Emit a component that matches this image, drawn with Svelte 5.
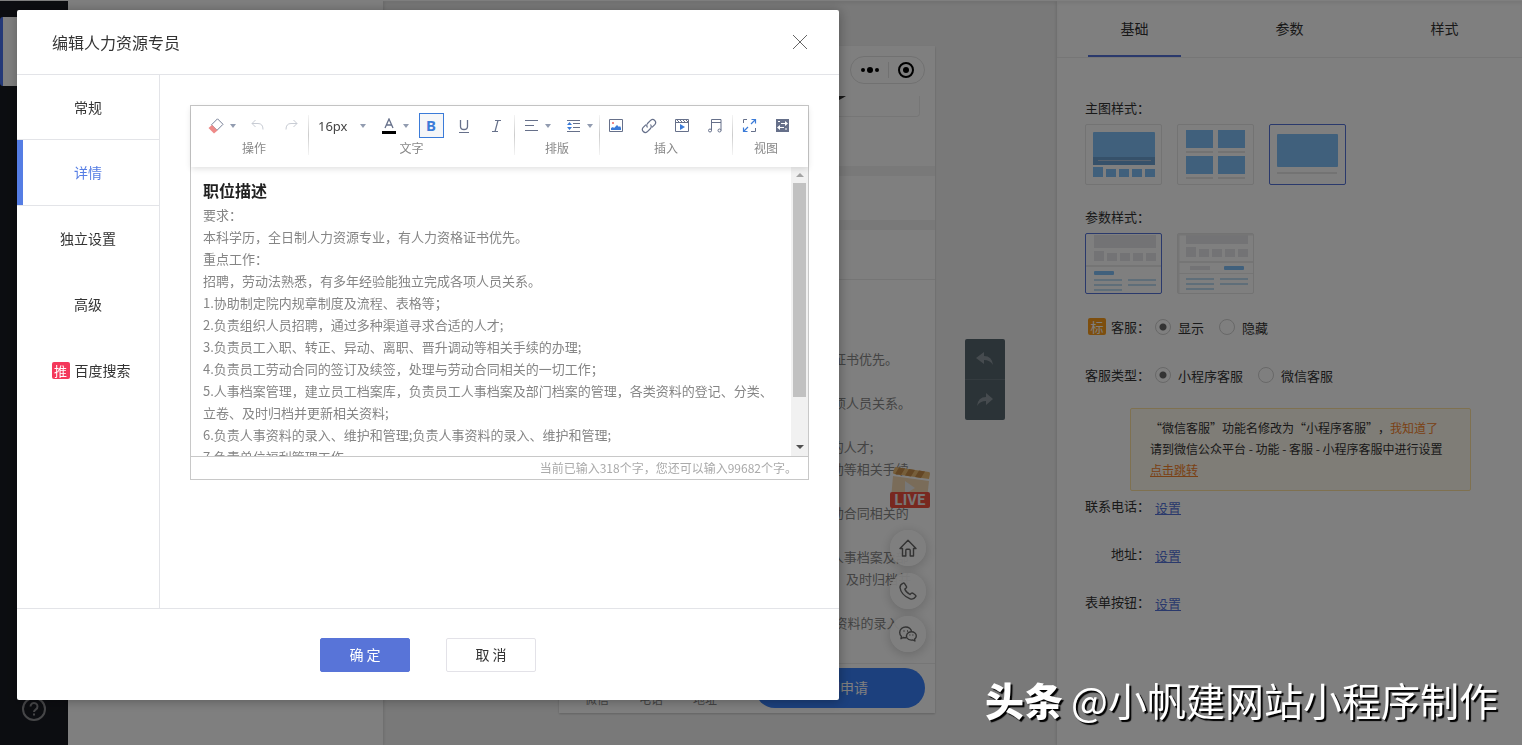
<script lang="ts">
	const tabs = [
		{ name: '常规' },
		{ name: '详情' },
		{ name: '独立设置' },
		{ name: '高级' },
		{ name: '百度搜索', badge: '推' }
	];
	const panelTabs = ['基础', '参数', '样式'];
	const duties = [
		'要求：',
		'本科学历，全日制人力资源专业，有人力资格证书优先。',
		'重点工作：',
		'招聘，劳动法熟悉，有多年经验能独立完成各项人员关系。',
		'1.协助制定院内规章制度及流程、表格等；',
		'2.负责组织人员招聘，通过多种渠道寻求合适的人才;',
		'3.负责员工入职、转正、异动、离职、晋升调动等相关手续的办理;',
		'4.负责员工劳动合同的签订及续签，处理与劳动合同相关的一切工作；',
		'5.人事档案管理，建立员工档案库，负责员工人事档案及部门档案的管理，各类资料的登记、分类、立卷、及时归档并更新相关资料;',
		'6.负责人事资料的录入、维护和管理;负责人事资料的录入、维护和管理;',
		'7.负责单位福利管理工作'
	];
	const links = ['联系电话：', '地址：', '表单按钮：'];

	let activeTab = $state('详情');
	let activePanel = $state('基础');
	let imageStyle = $state(2);
	let paramStyle = $state(0);
	let service = $state('显示');
	let serviceType = $state('小程序客服');
	let fontSize = $state('16px');
	let bold = $state(true);
</script>

{#snippet caret()}
	<svg class="caret" viewBox="0 0 6 4" width="6" height="4"><path d="M0 0h6L3 4z" fill="#929cb0" /></svg>
{/snippet}

<div class="app">
	<nav class="rail">
		<a class="rail-item" href="#design" aria-label="设计"></a>
		<button class="rail-help" aria-label="帮助">
			<svg viewBox="0 0 24 24" width="24" height="24" fill="none" stroke="currentColor" stroke-width="2"><circle cx="12" cy="12" r="11" /><path d="M8.5 9.5a3.5 3.5 0 1 1 5.4 2.9c-1.2.8-1.9 1.3-1.9 2.6" /><path d="M12 16.500v2" /></svg>
		</button>
	</nav>
	<div class="drawer"></div>

	<main class="canvas">
		<section class="phone">
			<div class="phone-top">
				<div class="capsule">
					<svg viewBox="0 0 18 8" width="18" height="8"><circle cx="2" cy="4" r="2" /><circle cx="9" cy="4" r="3" /><circle cx="16" cy="4" r="2" /></svg>
					<i></i>
					<svg viewBox="0 0 16 16" width="16" height="16"><circle cx="8" cy="8" r="7" fill="none" stroke="#000" stroke-width="2" /><circle cx="8" cy="8" r="3" /></svg>
				</div>
				<div class="phone-image">
					<svg viewBox="0 0 60 20" width="60" height="20"><path d="M0 16Q25 8 39 0h8Q32 10 0 18z" fill="#333" /></svg>
				</div>
			</div>
			<div class="phone-block"></div>
			<div class="phone-title"></div>
			<div class="phone-text">
				<h3>职位描述</h3>
				{#each duties as line}
					<p>{line}</p>
				{/each}
			</div>
			<footer class="phone-bar">
				<a href="#wechat">微信</a>
				<a href="#tel">电话</a>
				<a href="#address">地址</a>
				<button>立即申请</button>
			</footer>
			<div class="floats">
				<svg class="live" viewBox="0 0 40 41" width="40" height="41">
					<path d="M3 9l36 5-2 18H1z" fill="#efc791" opacity=".7" />
					<path d="M5 0l34 5q1 0 1 2l-1 5L4 7q-1 0-1-2z" fill="#edbd75" />
					<path d="M9 .6l6 .9-4 6.500-6-.9zM19 2l6 .9-4 6.500-6-.9zM29 3.500l6 .9-4 6.500-6-.9z" fill="#c98f4a" />
					<path d="M15 14l10 7-10 6z" fill="#eee" />
					<rect y="25" width="40" height="16" rx="2" fill="#f0503f" />
					<text x="20" y="38" text-anchor="middle">LIVE</text>
				</svg>
				<button aria-label="首页">
					<svg viewBox="0 0 18 18" width="18" height="18"><path d="M1 9.500L9 1.200l8 8.300h-2.500V17h-3.300v-5.500q0-1.200-1-1.200H7.800q-1 0-1 1.200V17H3.500V9.500z" /></svg>
				</button>
				<button aria-label="拨打电话">
					<svg viewBox="0 0 18 18" width="18" height="18"><path d="M4.200 1.200Q5 .8 5.600 1.700l1.700 2.600q.6 1-.2 1.700l-1.300 1q.8 3 5.200 5.500l1.300-1.200q.8-.6 1.700 0l2.500 1.900q.8.7.2 1.500-2.200 3.500-6 2Q2 12.800 1 5.500q0-2.800 3.200-4.300z" /></svg>
				</button>
				<button aria-label="微信">
					<svg viewBox="0 0 18 16" width="18" height="16"><path d="M7.500 11.600q-1.500.4-3.200-.1L2 12.700l.5-2.200Q.7 9 .7 6.500C.7 3.200 3.500 1 6.700 1c3 0 5.600 2 5.800 4.500" /><path d="M12.300 5.700c2.900 0 5 1.900 5 4.200 0 1.400-.7 2.500-1.700 3.200l.3 1.900-1.900-1q-4.400.7-6-2c-1.700-3.200 1-6.300 4.300-6.300z" /><path d="M4.500 5h1M8 5h1M10.500 9h.8M13.500 9h.8" /></svg>
				</button>
			</div>
		</section>
		<div class="history">
			<button aria-label="撤销"><svg viewBox="0 0 18 14" width="18" height="14"><path d="M8 0v4q8 0 9 9-3-5-9-5v4L0 6z" fill="#8c979e" /></svg></button>
			<button aria-label="重做"><svg viewBox="0 0 18 14" width="18" height="14"><path d="M10 0v4q-8 0-9 9 3-5 9-5v4l7-6z" fill="#8c979e" /></svg></button>
		</div>
	</main>

	<aside class="panel">
		<div class="panel-tabs">
			{#each panelTabs as tab}
				<button class:is-active={activePanel === tab} onclick={() => (activePanel = tab)}>{tab}</button>
			{/each}
		</div>
		<div class="panel-body">
			<h4>主图样式：</h4>
			<div class="thumbs">
				<button class:is-active={imageStyle === 0} onclick={() => (imageStyle = 0)} aria-label="轮播图">
					<svg viewBox="0 0 75 59" width="75" height="59">
						<rect x="7" y="7" width="62" height="33" rx="1" fill="#80c0f8" /><path d="M7 32h62v8H7z" fill="#6da2d4" /><path d="M12 35.500h53" stroke="#b0c4dc" />
						<path d="M7 42h10v10H7zM20 44h10v8H20zM33 44h10v8H33zM46 44h10v8H46zM59 44h10v8H59z" fill="#80c0f8" />
					</svg>
				</button>
				<button class:is-active={imageStyle === 1} onclick={() => (imageStyle = 1)} aria-label="双列图">
					<svg viewBox="0 0 75 59" width="75" height="59">
						<path d="M8 5h27v18H8zM40 5h27v18H40zM8 31h27v18H8zM40 31h27v18H40z" fill="#80c0f8" /><path d="M8 27h27M40 27h27M8 53h27M40 53h27" stroke="#e6e6e6" stroke-width="2" />
					</svg>
				</button>
				<button class:is-active={imageStyle === 2} onclick={() => (imageStyle = 2)} aria-label="单图">
					<svg viewBox="0 0 75 59" width="75" height="59">
						<rect x="7" y="9" width="61" height="33" rx="1" fill="#80c0f8" /><path d="M7 48h60" stroke="#e6e6e6" stroke-width="2" />
					</svg>
				</button>
			</div>
			<h4>参数样式：</h4>
			<div class="thumbs">
				<button class:is-active={paramStyle === 0} onclick={() => (paramStyle = 0)} aria-label="平铺参数">
					<svg viewBox="0 0 75 59" width="75" height="59">
						<path d="M8 1h62v13H8zM8 17h10v10H8zM21 19h10v8H21zM34 19h10v8H34zM47 19h10v8H47zM60 19h10v8H60z" fill="#e6e7ea" /><path d="M0 32h75" stroke="#eaeaea" stroke-width="2" />
						<rect x="8" y="37" width="20" height="4" rx="1" fill="#80c0f8" /><path d="M8 46h28M8 51h28M8 56h28M42 46h28M42 51h28" stroke="#bedcf2" stroke-width="2" />
					</svg>
				</button>
				<button class:is-active={paramStyle === 1} onclick={() => (paramStyle = 1)} aria-label="选项卡参数">
					<svg viewBox="0 0 75 59" width="75" height="59">
						<path d="M8 1h62v9H8zM8 13h10v10H8zM21 15h10v8H21zM34 15h10v8H34zM47 15h10v8H47zM60 15h10v8H60zM12 32h20v4H12z" fill="#e6e7ea" /><path d="M0 28h75M0 .5h75M.5 0v59" stroke="#eaeaea" stroke-width="2" /><path d="M0 39.500h75" stroke="#eaeaea" />
						<rect x="46" y="32" width="20" height="4" rx="1" fill="#80c0f8" /><path d="M8 45h28M8 50h28M8 55h28M42 45h28M42 50h28" stroke="#bedcf2" stroke-width="2" />
					</svg>
				</button>
			</div>
			<div class="fields">
				<div class="field">
					<span class="field-name"><b class="tag tag-orange">标</b>客服：</span>
					{#each ['显示', '隐藏'] as option}
						<label><input type="radio" name="service" value={option} bind:group={service} />{option}</label>
					{/each}
				</div>
				<div class="field">
					<span class="field-name">客服类型：</span>
					{#each ['小程序客服', '微信客服'] as option}
						<label><input type="radio" name="service-type" value={option} bind:group={serviceType} />{option}</label>
					{/each}
				</div>
				<div class="notice">
					“微信客服”功能名修改为“小程序客服”，<a class="plain" href="#known">我知道了</a><br />
					请到微信公众平台 - 功能 - 客服 - 小程序客服中进行设置<br />
					<a href="#jump">点击跳转</a>
				</div>
				{#each links as name}
					<div class="field">
						<span class="field-name">{name}</span>
						<a class="field-link" href="#set">设置</a>
					</div>
				{/each}
			</div>
		</div>
	</aside>
</div>

<div class="mask"></div>

<div class="modal" role="dialog" aria-label="编辑人力资源专员">
	<header class="modal-head">
		<h2>编辑人力资源专员</h2>
		<button class="close" aria-label="关闭"><svg viewBox="0 0 16 16" width="16" height="16"><path d="M1 1l14 14M15 1L1 15" stroke="#666" /></svg></button>
	</header>
	<div class="modal-body">
		<div class="side-tabs">
			{#each tabs as tab}
				<button class:is-active={activeTab === tab.name} onclick={() => (activeTab = tab.name)}>
					{#if tab.badge}<b class="tag tag-red">{tab.badge}</b>{/if}{tab.name}
				</button>
			{/each}
		</div>
		<div class="pane">
			<div class="editor">
				<div class="toolbar">
					<div class="group">
						<div class="tools">
							<button class="with-caret" aria-label="清除格式"><svg viewBox="0 0 16 16" width="16" height="16"><path d="M9.500.8l5.500 5.500-6 6L3.500 6.800z" fill="#fff" stroke="#66708a" stroke-width=".9" /><path d="M4 7l5.500 5.500L6 15.500.5 10z" fill="#ee8a88" /></svg>{@render caret()}</button>
							<button aria-label="撤销"><svg viewBox="0 0 16 16" width="16" height="16" fill="none" stroke="#c8ccd4"><path d="M5.500 2L2 5.500 5.500 9M2 5.500h6q5 0 5 6" /></svg></button>
							<button aria-label="重做"><svg viewBox="0 0 16 16" width="16" height="16" fill="none" stroke="#c8ccd4"><path d="M10.500 2L14 5.500 10.500 9M14 5.500H8q-5 0-5 6" /></svg></button>
						</div>
						<span>操作</span>
					</div>
					<i class="sep"></i>
					<div class="group">
						<div class="tools">
							<div class="size">
								<select bind:value={fontSize} aria-label="字号">
									<option>14px</option>
									<option>16px</option>
									<option>18px</option>
								</select>
								{@render caret()}
							</div>
							<button class="with-caret" aria-label="文字颜色"><svg viewBox="0 0 16 16" width="16" height="16"><path d="M4 10L8 1l4 9M5.500 7h5" fill="none" stroke="#66708a" stroke-width="1.300" /><path d="M1 13h14v3H1z" /></svg>{@render caret()}</button>
							<button aria-label="加粗" onclick={() => (bold = !bold)}><span class="bold" class:is-on={bold}>B</span></button>
							<button aria-label="下划线"><svg viewBox="0 0 16 16" width="16" height="16" fill="none" stroke="#66708a" stroke-width="1.300"><path d="M4.500 2v6.500q0 3 3.500 3t3.500-3V2" /><path d="M3 14.500h10" stroke-width="1" /></svg></button>
							<button aria-label="斜体"><svg viewBox="0 0 16 16" width="16" height="16" fill="none" stroke="#66708a" stroke-width="1.200"><path d="M6 2.500h6M3 13.500h6M9 2.500l-3 11" /></svg></button>
						</div>
						<span>文字</span>
					</div>
					<i class="sep"></i>
					<div class="group">
						<div class="tools">
							<button class="with-caret" aria-label="对齐"><svg viewBox="0 0 16 16" width="16" height="16" stroke="#66708a"><path d="M2 2.500h13M2 7.500h9M2 12.500h13" /></svg>{@render caret()}</button>
							<button class="with-caret" aria-label="行高"><svg viewBox="0 0 16 16" width="16" height="16"><path d="M2 2.500h13M8 5.500h7M8 9.500h7M2 13.500h13" stroke="#66708a" /><path d="M4.500 4L7 7H2zM2 9h5l-2.500 3z" fill="#3b7bd8" /></svg>{@render caret()}</button>
						</div>
						<span>排版</span>
					</div>
					<i class="sep"></i>
					<div class="group">
						<div class="tools">
							<button aria-label="图片"><svg viewBox="0 0 16 16" width="16" height="16"><path d="M1.500 1.500h13v12h-13z" fill="none" stroke="#66708a" /><path d="M4 4h2v2H4z" fill="#ee8a88" /><path d="M3 12V10l2-1 1 1 3-3 2 2 1-1 1 2v2z" fill="#3b7bd8" /></svg></button>
							<button aria-label="链接"><svg viewBox="0 0 16 16" width="16" height="16" fill="none" stroke="#66708a" stroke-width="1.200"><path d="M6.500 9.500q-1.500-2 0-4l3.300-3.300a3 3 0 0 1 4.200 4.200l-3 3" /><path d="M9.500 6.500q1.500 2 0 4l-3.300 3.300A3 3 0 0 1 2 9.600l3-3" /></svg></button>
							<button aria-label="视频"><svg viewBox="0 0 16 16" width="16" height="16"><path d="M1.500 1.500h13v12h-13zM1.500 4.500h13M3 2l2 2M6 2l2 2M9 2l2 2M12 2l2 2" fill="none" stroke="#66708a" /><path d="M6 6l5 3-5 3z" fill="#3b7bd8" /></svg></button>
							<button aria-label="音频"><svg viewBox="0 0 16 16" width="16" height="16" fill="none" stroke="#66708a"><path d="M4.500 12.500v-11h9.500v11M4.500 4.500H14" /><circle cx="3" cy="12.500" r="1.500" /><circle cx="12.500" cy="12.500" r="1.500" /></svg></button>
						</div>
						<span>插入</span>
					</div>
					<i class="sep"></i>
					<div class="group">
						<div class="tools">
							<button aria-label="全屏"><svg viewBox="0 0 16 16" width="16" height="16" fill="none"><path d="M2.500 5V1.500H6M10 13.500h4.500V10" stroke="#66708a" /><path d="M10.500 1.500h4V5.500M14 2l-4 4M6.500 13.500h-4v-4M3 13l4-4" stroke="#3b7bd8" stroke-width="1.200" /></svg></button>
							<button aria-label="源代码"><svg viewBox="0 0 16 16" width="16" height="16"><path d="M2 1h13v13H2z" fill="#66708a" /><path d="M7 5h4V3l3 2.500L11 8V6H7zM10 9H6V7L3 9.500 6 12v-2h4z" fill="#fff" /><path d="M4 3h2v1H4zM11 10.500h2v1h-2z" fill="#fff" /></svg></button>
						</div>
						<span>视图</span>
					</div>
				</div>
				<div class="writing">
					<div class="text" contenteditable="true" spellcheck="false" role="textbox" tabindex="0" aria-label="详情内容">
						<h3>职位描述</h3>
						{#each duties as line}
							<p>{line}</p>
						{/each}
					</div>
					<div class="scroll" aria-hidden="true">
						<svg viewBox="0 0 8 4" width="8" height="4"><path d="M0 4h8L4 0z" fill="#a3a3a3" /></svg>
						<div class="thumb"></div>
						<svg viewBox="0 0 8 4" width="8" height="4"><path d="M0 0h8L4 4z" fill="#505050" /></svg>
					</div>
				</div>
				<div class="count">当前已输入318个字，您还可以输入99682个字。</div>
			</div>
		</div>
	</div>
	<footer class="modal-foot">
		<button class="primary">确 定</button>
		<button>取 消</button>
	</footer>
</div>

<div class="watermark"><b>头条</b><span>@小帆建网站小程序制作</span></div>

<style>
	:global(body) {
		font-family: "Noto Sans CJK SC", "Noto Sans", sans-serif;
		font-size: 13px;
		color: #333;
		text-spacing-trim: space-all;
	}

	button {
		padding: 0;
		border: none;
		background: transparent;
		font-family: inherit;
		font-size: 14px;
		color: inherit;
	}

	h2, h3, h4, p {
		margin: 0;
	}

	.app {
		display: flex;
		height: 100vh;
		box-sizing: border-box;
		border-top: 1px solid #fff;
		overflow: hidden;
	}

	.rail {
		width: 68px;
		display: flex;
		flex-direction: column;
		justify-content: space-between;
		align-items: center;
		padding: 16px 0 24px;
		box-sizing: border-box;
		background: #191b22;
	}

	.rail-item {
		align-self: stretch;
		height: 69px;
		box-sizing: border-box;
		border-left: 3px solid #4a73f0;
		border-radius: 3px;
		background: #fff;
	}

	.rail-help {
		height: 24px;
		color: #8c8c90;
	}

	.drawer {
		width: 315px;
		background: #fff;
		box-shadow: 0 0 4px rgba(0, 0, 0, 0.15);
		z-index: 1;
	}

	.canvas {
		flex: 1;
		display: flex;
		gap: 30px;
		padding: 45px 0 32px 176px;
		background: #f3f3f3;
		box-shadow: inset 0 3px 3px rgba(0, 0, 0, 0.06);
	}

	.phone {
		position: relative;
		width: 376px;
		display: flex;
		flex-direction: column;
		background: #fff;
		box-shadow: 0 1px 2px rgba(0, 0, 0, 0.2);
	}

	.phone-top {
		display: flex;
		flex-direction: column;
		align-items: flex-end;
		height: 100px;
		padding: 10px;
	}

	.capsule {
		display: flex;
		align-items: center;
		gap: 9px;
		height: 26px;
		padding: 0 10px;
		border: 1px solid #e2e2e2;
		border-radius: 14px;
	}

	.capsule i {
		width: 1px;
		height: 16px;
		background: #e2e2e2;
	}

	.phone-image {
		width: 120px;
		height: 20px;
		margin: 12px 5px 0 0;
		border: 1px solid #ededed;
		border-top: none;
		border-left: none;
		border-radius: 0 0 4px 0;
	}

	.phone-block {
		height: 44px;
		border: solid #f3f3f3;
		border-width: 10px 0;
	}

	.phone-title {
		height: 49px;
		border-bottom: 1px solid #eaeaea;
	}

	.phone-text {
		flex: 1;
		min-height: 0;
		overflow: hidden;
		padding: 18px 20px 0 14px;
		line-height: 22px;
		color: #888;
	}

	.phone-text h3,
	.text h3 {
		font-size: 16px;
		line-height: 28px;
		color: #222;
	}

	.phone-bar {
		display: flex;
		align-items: flex-end;
		gap: 30px;
		height: 40px;
		padding: 4px 10px 5px 26px;
		border-top: 1px solid #ececec;
		background: #fff;
		font-size: 12px;
	}

	.phone-bar a {
		color: #888;
		line-height: 18px;
		text-decoration: none;
	}

	.phone-bar button {
		width: 170px;
		height: 40px;
		margin-left: auto;
		padding-bottom: 2px;
		border-radius: 20px;
		background: #3880fa;
		color: #fff;
	}

	.floats {
		position: absolute;
		right: 5px;
		bottom: 61px;
		display: flex;
		flex-direction: column;
		gap: 7px;
	}

	.live {
		margin-bottom: 15px;
	}

	.live text {
		font-size: 15px;
		font-weight: 700;
		fill: #eee;
	}

	.floats button {
		display: grid;
		place-items: center;
		width: 36px;
		height: 36px;
		border-radius: 50%;
		background: rgba(255, 255, 255, 0.92);
		box-shadow: 0 2px 12px rgba(0, 0, 0, 0.2);
	}

	.floats button svg {
		fill: none;
		stroke: #666;
		stroke-width: 1.400;
		stroke-linejoin: round;
	}

	.history {
		align-self: flex-start;
		margin-top: 293px;
		width: 40px;
		border-radius: 2px;
		background: #56666e;
	}

	.history button {
		display: grid;
		place-items: center;
		width: 40px;
		height: 40px;
	}

	.history button + button {
		border-top: 1px solid #69777e;
		box-sizing: content-box;
	}

	.panel {
		width: 465px;
		background: #fff;
		box-shadow: 0 0 4px rgba(0, 0, 0, 0.15);
		z-index: 1;
	}

	.panel-tabs {
		display: flex;
		border-bottom: 1px solid #ededed;
		box-shadow: inset 0 3px 3px rgba(0, 0, 0, 0.06);
	}

	.panel-tabs button {
		flex: 1;
		height: 56px;
		padding-bottom: 2px;
		color: #333;
		background: linear-gradient(#5573d8, #5573d8) center bottom / 0 2px no-repeat;
	}

	.panel-tabs .is-active {
		background-size: 93px 2px;
	}

	.panel-body {
		padding: 39px 28px 0;
	}

	h4 {
		font-size: 13px;
		font-weight: 400;
		line-height: 22px;
	}

	.thumbs {
		display: flex;
		gap: 15px;
		margin: 5px 0 21px;
	}

	.thumbs button {
		width: 77px;
		height: 61px;
		border: 1px solid #e6e6e6;
		border-radius: 2px;
	}

	.thumbs svg {
		display: block;
	}

	.thumbs .is-active {
		border-color: #5573d8;
	}

	.fields {
		margin-top: -3px;
	}

	.field {
		display: flex;
		align-items: center;
		height: 30px;
		margin-bottom: 18px;
	}

	.field-name {
		display: flex;
		justify-content: flex-end;
		align-items: center;
		min-width: 65px;
		margin-right: 5px;
		padding-bottom: 2px;
	}

	.field label {
		display: flex;
		align-items: center;
		gap: 7px;
		margin-right: 15px;
	}

	.field input {
		appearance: none;
		width: 16px;
		height: 16px;
		margin: 0;
		border: 1px solid #d0d0d0;
		border-radius: 50%;
	}

	.field input:checked {
		background: radial-gradient(circle, #666 3px, transparent 4px);
	}

	.field-link {
		padding-top: 2px;
		color: #5573d8;
	}

	.tag {
		width: 18px;
		margin-right: 5px;
		border-radius: 2px;
		font-size: 13px;
		font-weight: 400;
		line-height: 17px;
		text-align: center;
		color: #fff;
	}

	.tag-orange {
		background: #fa9d1c;
	}

	.tag-red {
		margin-left: 6px;
		background: #f4385b;
	}

	.notice {
		margin: 0 23px 0 45px;
		padding: 8px 18px 10px 19px;
		border: 1px solid #ffe3a0;
		border-radius: 2px;
		background: #fffaee;
		font-size: 12px;
		line-height: 21px;
		white-space: nowrap;
	}

	.notice a {
		color: #f5822a;
	}

	.notice .plain {
		text-decoration: none;
	}

	.mask {
		position: fixed;
		inset: 0;
		z-index: 10;
		background: rgba(0, 0, 0, 0.5);
	}

	.modal {
		position: fixed;
		z-index: 11;
		top: 10px;
		left: 17px;
		display: flex;
		flex-direction: column;
		width: 822px;
		height: calc(100vh - 55px);
		border-radius: 2px;
		background: #fff;
		box-shadow: 1px 1px 12px rgba(0, 0, 0, 0.3);
	}

	.modal-head {
		display: flex;
		justify-content: space-between;
		align-items: center;
		height: 64px;
		padding: 0 31px 0 35px;
		border-bottom: 1px solid #e3e4e8;
		margin-bottom: -1px;
	}

	.modal-head h2 {
		font-size: 16px;
		font-weight: 400;
	}

	.close {
		height: 16px;
	}

	.close svg {
		display: block;
	}

	.modal-body {
		flex: 1;
		display: flex;
		min-height: 0;
	}

	.side-tabs {
		width: 142px;
		border-right: 1px solid #e3e4e8;
		margin-top: 1px;
	}

	.side-tabs button {
		display: flex;
		justify-content: center;
		align-items: center;
		width: 100%;
		height: 66px;
		padding-bottom: 2px;
		box-sizing: border-box;
	}

	.side-tabs button:first-child {
		height: 65px;
	}

	.side-tabs .is-active {
		border: solid #e3e4e8;
		border-width: 1px 0;
		margin-top: -1px;
		height: 67px;
		background: linear-gradient(#557de4, #557de4) left / 6px 100% no-repeat;
		color: #557de4;
	}

	.pane {
		flex: 1;
		min-width: 0;
		padding: 31px 30px 0;
	}

	.editor {
		border: 1px solid #c8c8c8;
	}

	.toolbar {
		position: relative;
		display: flex;
		height: 61px;
		padding-left: 9px;
		background: #fff;
		box-shadow: 0 2px 6px rgba(0, 0, 0, 0.12);
	}

	.group {
		padding-top: 7px;
		text-align: center;
		font-size: 12px;
		line-height: 20px;
		color: #888;
	}

	.tools {
		display: flex;
		height: 25px;
	}

	.tools button {
		display: flex;
		justify-content: center;
		align-items: center;
		width: 33px;
		padding-right: 1px;
	}

	.tools .with-caret {
		width: 42px;
		gap: 6px;
		padding: 0 0 0 2px;
	}

	.size {
		display: flex;
		align-items: center;
		width: 64px;
	}

	.size select {
		appearance: none;
		width: 51px;
		padding: 0 0 0 9px;
		border: none;
		background: transparent;
		font-family: "Noto Sans", sans-serif;
		font-size: 13px;
		color: #444;
	}

	.bold {
		width: 23px;
		border: 1px solid transparent;
		font-family: "Noto Sans", sans-serif;
		font-size: 15px;
		font-weight: 700;
		line-height: 23px;
		color: #66708a;
	}

	.bold.is-on {
		border-color: #3b7bd8;
		background: #f5f6f8;
		color: #3b7bd8;
	}

	.sep {
		width: 1px;
		height: 40px;
		margin-top: 9px;
		background: linear-gradient(#f4f4f4, #ccc 50%, #f4f4f4);
	}

	.writing {
		display: flex;
		height: 289px;
	}

	.text {
		flex: 1;
		overflow: hidden;
		padding: 9px 12px 0;
		box-sizing: border-box;
		line-height: 22px;
		color: #858585;
		outline: none;
	}

	.scroll {
		display: flex;
		flex-direction: column;
		align-items: center;
		width: 17px;
		padding: 6px 0 7px;
		box-sizing: border-box;
		background: #f1f1f1;
	}

	.thumb {
		width: 13px;
		height: 214px;
		margin: 6px 0 auto;
		background: #c1c1c1;
	}

	.count {
		padding-right: 11px;
		border-top: 1px solid #c8c8c8;
		font-size: 12px;
		line-height: 22px;
		text-align: right;
		color: #aaa;
	}

	.modal-foot {
		display: flex;
		justify-content: center;
		gap: 36px;
		padding: 29px 0 28px;
		border-top: 1px solid #e3e4e8;
	}

	.modal-foot button {
		width: 90px;
		height: 34px;
		padding-bottom: 2px;
		border: 1px solid #e3e2e8;
		border-radius: 2px;
	}

	.modal-foot .primary {
		border-color: #5874d8;
		background: #5874d8;
		color: #fff;
	}

	.watermark {
		position: fixed;
		z-index: 12;
		right: 24px;
		bottom: 18px;
		display: flex;
		gap: 8px;
		font-size: 39px;
		line-height: 56px;
		color: #fff;
		text-shadow: 2px 2px 1px #000;
		pointer-events: none;
	}

	.watermark b {
		font-weight: 900;
	}
</style>
